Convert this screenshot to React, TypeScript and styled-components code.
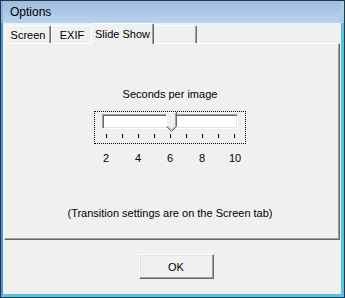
import styled, { createGlobalStyle } from "styled-components";

const GlobalStyle = createGlobalStyle`
  html, body {
    margin: 0;
    padding: 0;
    background: #f0f0f0;
  }
  * {
    box-sizing: border-box;
  }
`;

interface TabData {
  label: string;
  width: number;
  selected?: boolean;
}

const tabs: TabData[] = [
  { label: "Screen", width: 46 },
  { label: "EXIF", width: 42 },
  { label: "Slide Show", width: 63, selected: true },
  { label: "", width: 45 },
];

const ticks = [2, 3, 4, 5, 6, 7, 8, 9, 10];
const labels = [2, 4, 6, 8, 10];
const value = 6;

export default function App() {
  const thumbLeft = 4 + (value - 2) * 16 - 5;

  return (
    <>
      <GlobalStyle />
      <Window>
        <TitleBar>Options</TitleBar>
        <Client>
          <TabRow>
            {tabs.map((tab, index) => (
              <Tab key={index} $width={tab.width} $selected={tab.selected}>
                {tab.label}
              </Tab>
            ))}
          </TabRow>
          <Panel>
            <Caption>Seconds per image</Caption>
            <SliderBox>
              <Track>
                <Thumb style={{ left: thumbLeft }}>
                  <svg width="11" height="20" viewBox="0 0 11 20">
                    <polygon points="0.5,0.5 10.5,0.5 10.5,14.5 5.5,19.5 0.5,14.5" fill="#f0f0f0" />
                    <polyline points="0.5,15 0.5,0.5 10,0.5" fill="none" stroke="#ffffff" />
                    <polyline points="10.5,0 10.5,14.5 5.5,19.5 0.5,14.5" fill="none" stroke="#696969" />
                    <polyline points="9.5,1 9.5,14 5.5,18 1.5,14" fill="none" stroke="#a0a0a0" />
                  </svg>
                </Thumb>
              </Track>
              <TickRow>
                {ticks.map((t) => (
                  <Tick key={t} />
                ))}
              </TickRow>
            </SliderBox>
            <ScaleRow>
              {labels.map((l) => (
                <span key={l}>{l}</span>
              ))}
            </ScaleRow>
            <Note>(Transition settings are on the Screen tab)</Note>
          </Panel>
          <ButtonBar>
            <Button>OK</Button>
          </ButtonBar>
        </Client>
      </Window>
    </>
  );
}

const Window = styled.div`
  width: 345px;
  height: 298px;
  border: 1px solid #2b3540;
  display: flex;
  flex-direction: column;
  font-family: "Liberation Sans", Arial, sans-serif;
  font-size: 11px;
  color: #000;
`;

const TitleBar = styled.div`
  height: 22px;
  padding-left: 7px;
  display: flex;
  align-items: center;
  font-size: 12px;
  background: linear-gradient(#9ebde0, #bad3ee);
  border-left: 2px solid #8cb3dc;
  border-right: 3px solid #9fd2ef;
`;

const Client = styled.div`
  flex: 1;
  display: flex;
  flex-direction: column;
  background: #f0f0f0;
  border-left: 2px solid #4f95dc;
  border-right: 3px solid #4cc6ec;
  border-bottom: 3px solid #4cc6ec;
`;

const TabRow = styled.div`
  height: 20px;
  display: flex;
  align-items: flex-end;
  padding-left: 2px;
  position: relative;
  z-index: 1;
`;

const Tab = styled.div<{ $width: number; $selected?: boolean }>`
  width: ${(p) => p.$width}px;
  height: ${(p) => (p.$selected ? 21 : 18)}px;
  margin: ${(p) => (p.$selected ? "0 -2px -1px -2px" : "0")};
  padding: ${(p) => (p.$selected ? "4px" : "3px")} 0 0;
  text-align: center;
  line-height: 13px;
  background: #f0f0f0;
  border-top: 1px solid #ffffff;
  border-left: 1px solid #ffffff;
  border-right: 1px solid #696969;
  border-radius: 2px 2px 0 0;
  box-shadow: inset -1px 0 0 #a0a0a0;
  position: relative;
  z-index: ${(p) => (p.$selected ? 2 : 0)};
`;

const Panel = styled.div`
  height: 197px;
  margin: 0 1px;
  display: flex;
  flex-direction: column;
  align-items: center;
  padding-right: 4px;
  border-top: 1px solid #ffffff;
  border-left: 1px solid #ffffff;
  border-right: 1px solid #696969;
  border-bottom: 1px solid #696969;
  box-shadow: inset -1px -1px 0 #a0a0a0;
`;

const Caption = styled.div`
  margin-top: 44px;
  line-height: 13px;
`;

const SliderBox = styled.div`
  margin-top: 10px;
  width: 152px;
  height: 33px;
  border: 1px dotted #000;
  padding: 2px 0 0 7px;
`;

const Track = styled.div`
  position: relative;
  width: 136px;
  height: 15px;
  background: #ffffff;
  border-top: 1px solid #a0a0a0;
  border-left: 1px solid #a0a0a0;
  border-right: 1px solid #ffffff;
  border-bottom: 1px solid #ffffff;
  box-shadow: inset 1px 1px 0 #696969, inset -1px -1px 0 #e3e3e3;
`;

const Thumb = styled.div`
  position: absolute;
  top: -3px;
  width: 11px;
  height: 20px;
  line-height: 0;
`;

const TickRow = styled.div`
  margin: 5px 0 0 4px;
  width: 129px;
  height: 4px;
  display: flex;
  justify-content: space-between;
`;

const Tick = styled.div`
  width: 1px;
  height: 4px;
  background: #000;
`;

const ScaleRow = styled.div`
  margin-top: 8px;
  display: grid;
  grid-template-columns: repeat(5, 32px);
  text-align: center;
  line-height: 13px;
  span:last-child {
    padding-left: 2px;
  }
`;

const Note = styled.div`
  margin-top: 42px;
  line-height: 13px;
`;

const ButtonBar = styled.div`
  flex: 1;
  display: flex;
  justify-content: center;
  align-items: flex-start;
  padding: 14px 0 0 8px;
`;

const Button = styled.button`
  width: 75px;
  height: 25px;
  font-family: "Liberation Sans", Arial, sans-serif;
  font-size: 11px;
  color: #000;
  background: #f0f0f0;
  border-top: 1px solid #ffffff;
  border-left: 1px solid #ffffff;
  border-right: 1px solid #696969;
  border-bottom: 1px solid #696969;
  box-shadow: inset -1px -1px 0 #a0a0a0, inset 1px 1px 0 #e3e3e3;
  padding: 0;
`;
